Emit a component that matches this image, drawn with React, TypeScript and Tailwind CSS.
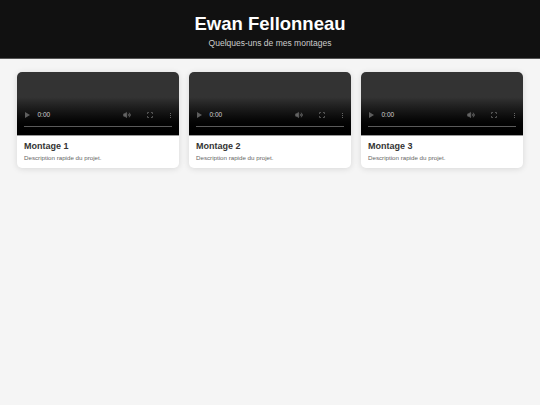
import { Volume2 } from "lucide-react";

const montages = ["Montage 1", "Montage 2", "Montage 3"];

function VideoPlayer() {
  return (
    <div className="flex h-[63px] flex-col justify-end bg-gradient-to-b from-[#333333] from-40% to-black">
      <div className="flex h-[13px] items-center px-[7px]">
        <svg width="5" height="6" viewBox="0 0 5 6" className="ml-[0.5px]">
          <path d="M0 0 L5 3 L0 6 Z" fill="#5e5e5e" />
        </svg>
        <span className="ml-[8px] text-[6.5px] leading-none text-[#d0d0d0]">0:00</span>
        <Volume2 size={8} strokeWidth={2} className="ml-auto text-[#666666]" fill="#666666" />
        <svg width="6" height="6" viewBox="0 0 6 6" className="ml-[16px]" fill="none" stroke="#666666" strokeWidth="0.8">
          <path d="M0.5 2 V0.5 H2 M4 0.5 H5.5 V2 M5.5 4 V5.5 H4 M2 5.5 H0.5 V4" />
        </svg>
        <div className="ml-[17px] mr-[1px] flex flex-col gap-[1px]">
          <div className="h-[1px] w-[1px] bg-[#666666]" />
          <div className="h-[1px] w-[1px] bg-[#666666]" />
          <div className="h-[1px] w-[1px] bg-[#666666]" />
        </div>
      </div>
      <div className="mx-[7px] mt-[4px] mb-[8px] h-[1.5px] bg-[#5a5a5a]" />
    </div>
  );
}

export default function App() {
  return (
    <div className="min-h-[405px] bg-[#f5f5f5] font-['Liberation_Sans',Arial,sans-serif]">
      <header className="h-[59px] border-b border-[#555555] bg-[#111111] pt-[13px] text-center">
        <h1 className="text-[18.5px] leading-[21px] font-bold text-white">Ewan Fellonneau</h1>
        <p className="mt-[4px] text-[8.5px] leading-[10px] text-[#cccccc]">Quelques-uns de mes montages</p>
      </header>

      <main className="grid grid-cols-3 gap-[10px] px-[17px] pt-[13px]">
        {montages.map((title) => (
          <div key={title} className="overflow-hidden rounded-[5px] bg-white shadow-[0_1px_6px_rgba(0,0,0,0.12)]">
            <VideoPlayer />
            <div className="h-[33px] border-t border-[#999999] px-[7px] pt-[5px]">
              <h3 className="text-[9px] leading-[11px] font-bold text-[#333333]">{title}</h3>
              <p className="mt-[2px] text-[6.2px] leading-[8px] text-[#666666]">Description rapide du projet.</p>
            </div>
          </div>
        ))}
      </main>
    </div>
  );
}
